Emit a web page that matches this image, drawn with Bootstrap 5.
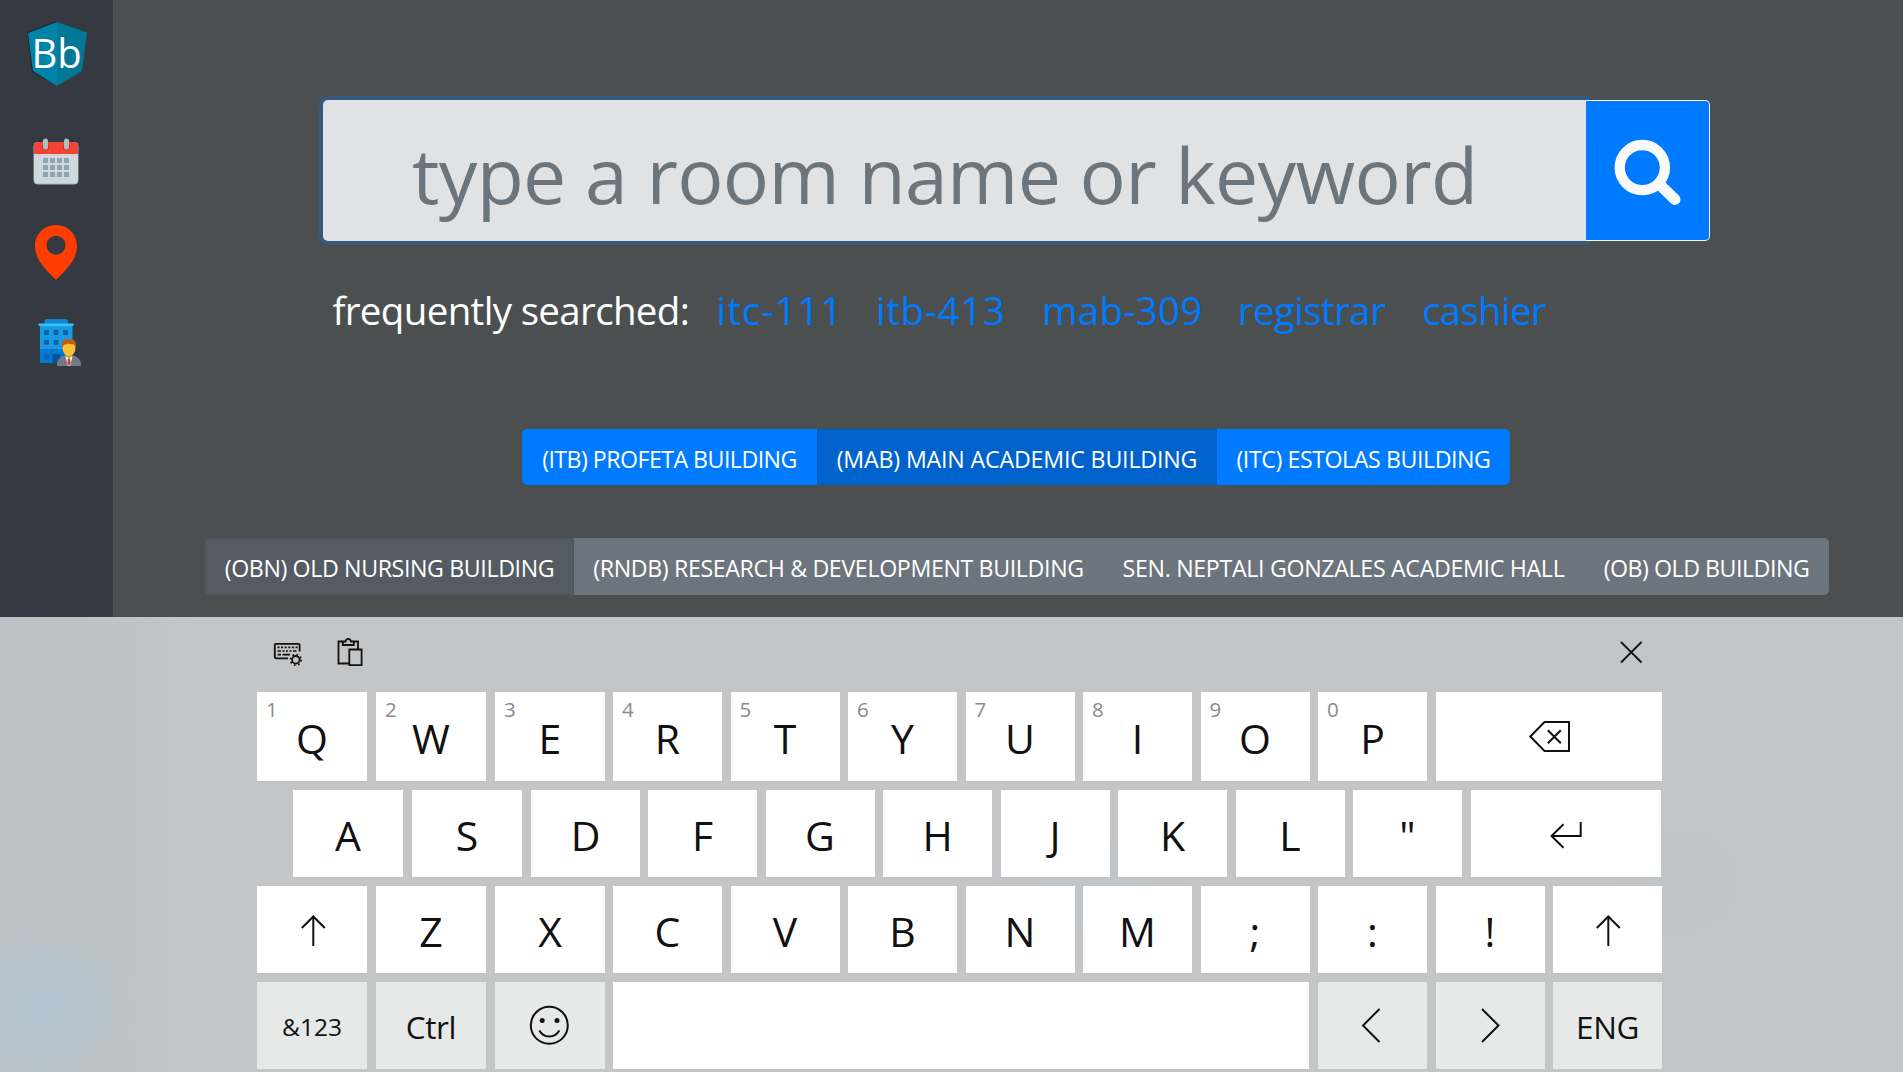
<!DOCTYPE html>
<html lang="en">
<head>
<meta charset="utf-8">
<meta name="viewport" content="width=device-width, initial-scale=1">
<title>Room finder</title>
<link href="https://cdn.jsdelivr.net/npm/bootstrap@5.3.0/dist/css/bootstrap.min.css" rel="stylesheet">
<style>
body{font-family:"Open Sans","Noto Sans",sans-serif;background:#4b4f4f;width:1903px;height:1072px;overflow:hidden}
svg{display:block;flex:none}
.app-area{height:617px}
.side-rail{width:113px;background:#353942}
.logo-text{font-size:40px;fill:#fff}
.finder{padding:100px 0 0;flex:1}
.search-bar{width:1387px;height:141px;margin-left:210px;flex-wrap:nowrap}
.search-bar .search-input{background:#e0e2e6;border:0;border-radius:5px 0 0 5px;box-shadow:0 0 0 4px #365a7e;padding:8px 0 0 89px;font-size:77px;letter-spacing:-.68px;line-height:1.3;height:141px}
.search-bar .search-input::placeholder{color:#6c757d;opacity:1}
.search-bar .search-btn{width:124px;flex:none;background:#007bff;border:1px solid #f8f9fa;border-left:0;border-radius:0 5px 5px 0;padding:0;z-index:6;margin-left:0!important}
.quick{margin:39px 0 0 219.500px;height:60px;font-size:38.5px;line-height:60px;white-space:nowrap}
.quick span{letter-spacing:-.66px}
.quick a{color:#007bff;text-decoration:none}
.q1{margin-left:27.4px;letter-spacing:.9px}
.q2{margin-left:32.8px;letter-spacing:.55px}
.q3{margin-left:36.7px;letter-spacing:.2px}
.q4{margin-left:35.4px;letter-spacing:-.6px}
.q5{margin-left:36.9px;letter-spacing:-.75px}
.bldg{display:flex}
.bldg .btn{flex:none;border:0;padding:2px 0 0;font-size:23.2px;line-height:54px;white-space:nowrap;color:#fff;border-radius:0;margin:0!important}
.bldg .btn:first-child{border-radius:5px 0 0 5px}
.bldg .btn:last-child{border-radius:0 5px 5px 0}
.bldg-main{margin:89px 0 0 409px}
.bldg-main .btn{background:#007bff;height:56px;line-height:52px;padding-top:4px}
.bldg-main .btn.active{background:#0062cc;box-shadow:inset 0 0 0 1px #005cbf}
.bldg-more{margin:53px 0 0 92px}
.bldg-more .btn{background:#6c757d;height:57px}
.bldg-more .btn.active{background:#545b62;box-shadow:inset 0 0 0 1px #4e555b}
.w-itb{width:295px;letter-spacing:-.54px}.w-mab{width:400px;letter-spacing:-.17px}.w-itc{width:293px;letter-spacing:-.43px}
.w-obn{width:369px;letter-spacing:-.38px}.w-rnd{width:529px;letter-spacing:-.36px}.w-sen{width:481px;letter-spacing:-.32px}.w-ob{width:245px;letter-spacing:-.48px}
.osk{height:455px;padding-left:257px;color:#111;
 background:radial-gradient(ellipse 110px 95px at 45px 390px,#b3c6d3 0,rgba(181,198,210,.75) 40%,rgba(188,195,205,.2) 80%,rgba(188,195,205,0) 100%),
 radial-gradient(ellipse 90px 80px at 1680px 265px,#bfc5c8 0,rgba(190,197,201,0) 100%),
 radial-gradient(ellipse 120px 60px at 1090px 270px,#bec5c9 0,rgba(190,197,201,0) 100%),
 linear-gradient(90deg,#bcc2c7 0,#bec3c5 90px,#c4c5c7 200px,#c4c5c7 100%)}
.osk-tools{height:75px}
.osk-row{margin-bottom:9px}
.osk-row-two{padding-left:36px}
.cap{flex:none;position:relative;display:flex;align-items:center;justify-content:center;width:109px;height:87px;margin-right:8.5px;padding-top:4px;background:#fff;font-size:41px;line-height:1;white-space:nowrap}
.osk-row-one .cap{height:89px}
.cap:nth-child(-n+3){width:110px;margin-right:9px}
.cap:nth-child(3){margin-right:8px}
.osk-row-two .cap:nth-child(3){width:109px}
.cap small{position:absolute;left:9px;top:7px;font-size:20.500px;line-height:21px;color:#8a8a8a}
.cap-icon{padding:0}
.cap.fn-cap{background:#e7e9e8}
.cap.cap-text{font-size:31.500px;letter-spacing:-.4px;padding-top:3px}
.cap.cap-num{font-size:24.5px;padding-top:3px}
.cap.cap-back{width:226.5px;margin:0}
.cap.cap-enter{width:190.5px;margin:0}
.cap.cap-space{width:696px;margin-right:9px}
.ln{fill:none;stroke:#111;stroke-width:2}
.ln-fine{stroke-width:1.8}
</style>
</head>
<body>
<div class="app-area d-flex">
<nav class="side-rail d-flex flex-column">
<svg width="113" height="110" viewBox="0 0 113 110"><path d="M56 21 27 32 32 72 57 86V22z" fill="#22262c"/><path d="M57 22 28 33 33 71 57 86z" fill="#0083a8"/><path d="M57 22 87 32.500 82 71 57 86z" fill="#007896"/><text class="logo-text" x="31.500" y="67.500">Bb</text></svg>
<svg width="113" height="95" viewBox="0 110 113 95"><rect x="33.500" y="142" width="45" height="42.500" rx="4.500" fill="#aab6bc"/><rect x="34" y="142" width="44" height="41.500" rx="4" fill="#cfd8dd"/><path d="M34 154v-8q0-4 4-4h36q4 0 4 4v8z" fill="#f44336"/><circle cx="45.500" cy="147" r="3.500" fill="#c9372d"/><circle cx="66.500" cy="147" r="3.500" fill="#c9372d"/><rect x="43" y="138.500" width="5" height="11" rx="2.500" fill="#b0bec5"/><rect x="64" y="138.500" width="5" height="11" rx="2.500" fill="#b0bec5"/><path d="M43 158h5v5h-5zM50 158h5v5h-5zM57 158h5v5h-5zM64 158h5v5h-5zM43 165h5v5h-5zM50 165h5v5h-5zM57 165h5v5h-5zM64 165h5v5h-5zM43 172h5v5h-5zM50 172h5v5h-5zM57 172h5v5h-5zM64 172h5v5h-5z" fill="#90a4ae"/></svg>
<svg width="113" height="95" viewBox="0 205 113 95"><path fill="#ff3d00" fill-rule="evenodd" d="M56 225C44.400 225 35 234.200 35 245.800C35 261 48 271.500 56 280C64 271.500 77 261 77 245.800C77 234.200 67.600 225 56 225zM56 235.700a9.500 9.500 0 1 1 0 19a9.500 9.500 0 1 1 0-19z"/></svg>
<svg width="113" height="90" viewBox="0 300 113 90"><path d="M44.500 324v-3q0-2 2-2h19.500q2 0 2 2v3z" fill="#1486d0"/><path d="M40 325h32.500v24h-32.500z" fill="#199be2"/><path d="M40 349h32.500v14h-32.500z" fill="#0078d4"/><path d="M38.500 323.500h35v2.500h-35z" fill="#35c1f1"/><path d="M44 330h5v5h-5zM53.500 330h5v5h-5zM63 330h5v5h-5zM44 340h5v4.700h-5zM53.500 340h5v4.700h-5zM44 354h5v4.700h-5z" fill="#0d62ab"/><path d="M52.500 354h8v9h-8z" fill="#0a519c"/><path d="M57 366v-2c0-6 6-8 9-9.300h6c3 1.300 9 3.300 9 9.300v2z" fill="#727a84"/><path d="M65.500 356.500h7l-2.500 9.500h-2z" fill="#fff"/><path d="M68 358.500h2l.6 4.500-1.600 3-1.600-3z" fill="#d32f2f"/><path d="M66 351h6v5l-3 2.500-3-2.500z" fill="#d69a1e"/><ellipse cx="69" cy="348.500" rx="6.400" ry="7.500" fill="#fbc334"/><path d="M62 348c-1.500-6 2-9.200 7-9.200s8.200 3.200 6.800 9.200l-1.600-3.800c-3 .2-5-.2-6.500-1-1.200 1.400-2.600 1.500-4 1.400z" fill="#c05a17"/></svg>
</nav>
<main class="finder">
<div class="input-group search-bar">
<input class="form-control search-input" type="text" placeholder="type a room name or keyword" aria-label="Search">
<button class="btn search-btn" type="button" aria-label="Go"><svg width="123" height="139" viewBox="1586 101 123 139"><circle cx="1642.300" cy="167.600" r="22.600" fill="none" stroke="#f8f9fa" stroke-width="10.300"/><path d="M1659 184 1675 199.500" stroke="#f8f9fa" stroke-width="11" stroke-linecap="round"/></svg></button>
</div>
<div class="quick d-flex text-white"><span>frequently searched:</span><a class="q1" href="#">itc-111</a><a class="q2" href="#">itb-413</a><a class="q3" href="#">mab-309</a><a class="q4" href="#">registrar</a><a class="q5" href="#">cashier</a></div>
<div class="bldg bldg-main"><button class="btn w-itb">(ITB) PROFETA BUILDING</button><button class="btn active w-mab">(MAB) MAIN ACADEMIC BUILDING</button><button class="btn w-itc">(ITC) ESTOLAS BUILDING</button></div>
<div class="bldg bldg-more"><button class="btn active w-obn">(OBN) OLD NURSING BUILDING</button><button class="btn w-rnd">(RNDB) RESEARCH &amp; DEVELOPMENT BUILDING</button><button class="btn w-sen">SEN. NEPTALI GONZALES ACADEMIC HALL</button><button class="btn w-ob">(OB) OLD BUILDING</button></div>
</main>
</div>
<section class="osk">
<div class="osk-tools d-flex">
<svg width="63" height="75" viewBox="257 617 63 75"><path class="ln ln-fine" d="M288 658.300h-11.500q-1.700 0-1.700-1.700v-11.500q0-1.300 1.300-1.300h22q1.500 0 1.500 1.300v6.500"/><path d="M277.500 647.300h21" stroke="#111" stroke-width="1.800" stroke-dasharray="2 1.600"/><path d="M277.500 651h3.500m1.500 0h2m1.500 0h2m1.500 0h2m1.500 0h3.500M277.500 654.700h3.500m1.500 0h7.500" stroke="#111" stroke-width="1.700" fill="none"/><circle class="ln ln-fine" cx="295.800" cy="659.800" r="3.800"/><circle class="ln ln-fine" cx="295.800" cy="659.800" r="5.300" stroke-dasharray="1.700 2.462"/></svg>
<svg width="60" height="75" viewBox="320 617 60 75"><path class="ln ln-fine" d="M348.500 663.500h-10v-22h5M353 641.500h5v7M342.800 645v-3.500h2.800q.3-2.700 2.600-2.700t2.700 2.700h2.900v3.500zM349.300 649.500h12.300v15.700h-12.300z"/></svg>
<svg class="ms-auto" style="margin-right:241px" width="62" height="75" viewBox="1600 617 62 75"><path class="ln ln-fine" d="M1621 642l20.500 20.500M1641.500 642l-20.500 20.500" stroke-width="1.400"/></svg>
</div>
<div class="osk-row osk-row-one d-flex"><div class="cap"><small>1</small>Q</div><div class="cap"><small>2</small>W</div><div class="cap"><small>3</small>E</div><div class="cap"><small>4</small>R</div><div class="cap"><small>5</small>T</div><div class="cap"><small>6</small>Y</div><div class="cap"><small>7</small>U</div><div class="cap"><small>8</small>I</div><div class="cap"><small>9</small>O</div><div class="cap"><small>0</small>P</div><div class="cap cap-icon cap-back"><svg width="226" height="89" viewBox="1436 692 226 89"><path class="ln" d="M1530.300 736.500 1544.500 722H1569v29h-24.500zM1547.800 730.300l13 13M1560.800 730.300l-13 13"/></svg></div></div>
<div class="osk-row osk-row-two d-flex"><div class="cap">A</div><div class="cap">S</div><div class="cap">D</div><div class="cap">F</div><div class="cap">G</div><div class="cap">H</div><div class="cap">J</div><div class="cap">K</div><div class="cap">L</div><div class="cap">"</div><div class="cap cap-icon cap-enter"><svg width="190" height="87" viewBox="1471 790 190 87"><path class="ln" d="M1580.700 822v14h-28M1563.500 824.300l-12 11.700 12 11.700"/></svg></div></div>
<div class="osk-row d-flex"><div class="cap cap-icon"><svg width="110" height="87" viewBox="257 886 110 87"><path class="ln" d="M313.300 946v-29M301.800 928l11.500-11.500 11.500 11.500"/></svg></div><div class="cap">Z</div><div class="cap">X</div><div class="cap">C</div><div class="cap">V</div><div class="cap">B</div><div class="cap">N</div><div class="cap">M</div><div class="cap">;</div><div class="cap">:</div><div class="cap">!</div><div class="cap cap-icon"><svg width="109" height="87" viewBox="1553 886 109 87"><path class="ln" d="M1608.300 946v-29M1596.800 928l11.500-11.500 11.500 11.500"/></svg></div></div>
<div class="osk-row d-flex"><div class="cap fn-cap cap-num">&amp;123</div><div class="cap fn-cap cap-text">Ctrl</div><div class="cap fn-cap cap-icon"><svg width="110" height="87" viewBox="495 982 110 87"><circle class="ln" cx="549.300" cy="1025.300" r="18.500"/><circle cx="542.200" cy="1020.600" r="2.500" fill="#111"/><circle cx="557" cy="1020.600" r="2.500" fill="#111"/><path class="ln" d="M539.300 1030.500q3.300 6 10 6t10-6"/></svg></div><div class="cap cap-space"></div><div class="cap fn-cap cap-icon"><svg width="109" height="87" viewBox="1318 982 109 87"><path class="ln" d="M1379.500 1009l-16.500 16.500 16.500 16.500"/></svg></div><div class="cap fn-cap cap-icon"><svg width="109" height="87" viewBox="1436 982 109 87"><path class="ln" d="M1482 1009l16.500 16.500-16.500 16.500"/></svg></div><div class="cap fn-cap cap-text">ENG</div></div>
</section>
<script src="https://cdn.jsdelivr.net/npm/bootstrap@5.3.0/dist/js/bootstrap.bundle.min.js"></script>
</body>
</html>
